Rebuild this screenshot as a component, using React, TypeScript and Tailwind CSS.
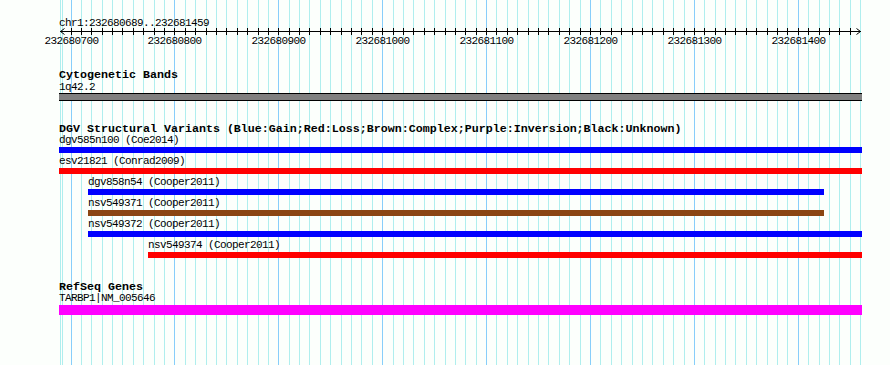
const START = 232680689;
const END = 232681459;
const PX_PER_BP = 1.039;

// pixel column of a base, same floor rounding as the source image
const xOf = (bp: number) => Math.floor(71 + (bp - 232680700) * PX_PER_BP);

const tracks = [
  { label: 'dgv585n100 (Coe2014)', offset: 'ml-0', width: 'w-[803px]', color: 'bg-[#0000ff]' },
  { label: 'esv21821 (Conrad2009)', offset: 'ml-0', width: 'w-[803px]', color: 'bg-[#ff0000]' },
  { label: 'dgv858n54 (Cooper2011)', offset: 'ml-[29px]', width: 'w-[736px]', color: 'bg-[#0000ff]' },
  { label: 'nsv549371 (Cooper2011)', offset: 'ml-[29px]', width: 'w-[736px]', color: 'bg-[#8b4513]' },
  { label: 'nsv549372 (Cooper2011)', offset: 'ml-[29px]', width: 'w-[774px]', color: 'bg-[#0000ff]' },
  { label: 'nsv549374 (Cooper2011)', offset: 'ml-[89px]', width: 'w-[714px]', color: 'bg-[#ff0000]' },
];

function Grid() {
  const lines: { x: number; major: boolean }[] = [];
  for (let bp = 232680690; bp <= 232681460; bp += 10) {
    lines.push({ x: xOf(bp), major: bp % 100 === 0 });
  }
  return (
    <svg className="absolute inset-0" width={890} height={365}>
      <line x1={62.5} x2={62.5} y1={0} y2={365} stroke="#afeeee" />
      {lines.map((l) => (
        <line
          key={l.x}
          x1={l.x + 0.5}
          x2={l.x + 0.5}
          y1={0}
          y2={365}
          stroke={l.major ? '#87cefa' : '#afeeee'}
        />
      ))}
    </svg>
  );
}

function Ruler() {
  const ticks: number[] = [];
  for (let bp = 232680700; bp <= 232681450; bp += 10) ticks.push(bp);
  const labels = ticks.filter((bp) => bp % 100 === 0);

  return (
    <svg width={890} height={18} className="block shrink-0">
      <line x1={60} x2={861} y1={3.5} y2={3.5} stroke="#000" />
      <polyline points="64.5,0.5 60.5,3.5 64.5,6.5" fill="none" stroke="#000" />
      <polyline points="856.5,0.5 860.5,3.5 856.5,6.5" fill="none" stroke="#000" />
      {ticks.map((bp) => (
        <line key={bp} x1={xOf(bp) + 0.5} x2={xOf(bp) + 0.5} y1={0} y2={7} stroke="#000" />
      ))}
      {labels.map((bp) => (
        <text
          key={bp}
          x={xOf(bp) + 0.5}
          y={15.5}
          textAnchor="middle"
          fontFamily="'Liberation Mono', 'DejaVu Sans Mono', monospace"
          fontSize={11}
          letterSpacing={-0.6}
          fill="#000"
        >
          {bp}
        </text>
      ))}
    </svg>
  );
}

const small = "text-[11px] tracking-[-0.6px] leading-[11px] h-[11px] whitespace-nowrap";
const title = "text-[11.67px] font-bold whitespace-nowrap";

export default function App() {
  return (
    <div className="relative w-[890px] h-[365px] overflow-hidden bg-[#fcfffc] text-black font-['Liberation_Mono','DejaVu_Sans_Mono',monospace]">
      <Grid />

      <div className="relative flex flex-col pt-[18px]">
        <div className="pl-[59px] text-[11px] tracking-[-0.6px] leading-[10px] h-[10px] whitespace-nowrap">
          chr1:{START}..{END}
        </div>
        <Ruler />

        <div className="flex flex-col pl-[59px]">
          <div className={`${title} mt-[22px] leading-[14px] h-[14px]`}>Cytogenetic Bands</div>
          <div className={small}>1q42.2</div>
          <div className="w-[803px] h-[8px] bg-[#808080] border-y border-black" />

          <div className={`${title} mt-[22px] leading-[12px] h-[12px]`}>
            DGV Structural Variants (Blue:Gain;Red:Loss;Brown:Complex;Purple:Inversion;Black:Unknown)
          </div>
          <div className="flex flex-col gap-[3px]">
            {tracks.map((t) => (
              <div key={t.label} className={`flex flex-col ${t.offset}`}>
                <div className={small}>{t.label}</div>
                <div className={`mt-px h-[6px] ${t.width} ${t.color}`} />
              </div>
            ))}
          </div>

          <div className={`${title} mt-[23px] leading-[12px] h-[12px]`}>RefSeq Genes</div>
          <div className={small}>TARBP1|NM_005646</div>
          <div className="mt-px w-[803px] h-[10px] bg-[#ff00ff]" />
        </div>
      </div>
    </div>
  );
}
